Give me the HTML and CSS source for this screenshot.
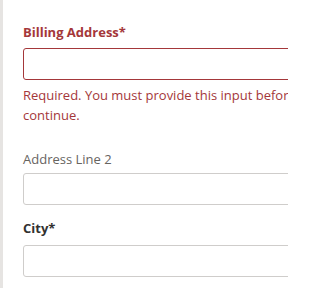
FILE: index.html
```html
<!DOCTYPE html>
<html lang="en">
<head>
<meta charset="utf-8">
<title>Billing form</title>
<link rel="stylesheet" href="styles.css">
</head>
<body>
<div class="panel">
  <div class="field field-error">
    <label class="label label-strong label-error" for="billing">Billing Address*</label>
    <input class="input input-error" id="billing" type="text">
    <div class="error-msg">Required. You must provide this input before you can continue.</div>
  </div>
  <div class="field field-plain">
    <label class="label label-muted" for="line2">Address Line 2</label>
    <input class="input" id="line2" type="text">
  </div>
  <div class="field field-city">
    <label class="label label-strong" for="city">City*</label>
    <input class="input" id="city" type="text">
  </div>
</div>
</body>
</html>
```
FILE: styles.css
```css
html, body {
  margin: 0;
  padding: 0;
  background: #ffffff;
  width: 288px;
  height: 288px;
  overflow: hidden;
}
body {
  font-family: "Open Sans", "Noto Sans", sans-serif;
  font-size: 13px;
}
.panel {
  border-left: 3px solid #e6e4e2;
  padding: 22px 0 0 20px;
  width: 288px;
  height: 288px;
  box-sizing: border-box;
  overflow: hidden;
}
.field {
  display: flex;
  flex-direction: column;
  align-items: flex-start;
}
.label {
  display: block;
  line-height: 20px;
  font-size: 13px;
}
.label-strong {
  font-weight: 700;
  color: #323130;
}
.label-error {
  color: #a4373a;
}
.label-muted {
  color: #67645f;
}
.input {
  height: 32px;
  box-sizing: border-box;
  border: 1px solid #cfcdcb;
  border-radius: 3px;
  background: #fff;
  margin: 0;
  padding: 0 8px;
  width: 300px;
  flex: none;
  font: inherit;
}
.input-error {
  border-color: #a4373a;
}
.field-error .label { margin-bottom: 6px; }
.error-msg {
  padding-top: 5px;
  line-height: 20px;
  color: #a4373a;
  font-size: 13px;
  width: 340px;
  flex: none;
}
.field-plain {
  margin-top: 24px;
}
.field-plain .label { margin-bottom: 4px; }
.field-city {
  margin-top: 13px;
}
.field-city .label { margin-bottom: 7px; }
```
